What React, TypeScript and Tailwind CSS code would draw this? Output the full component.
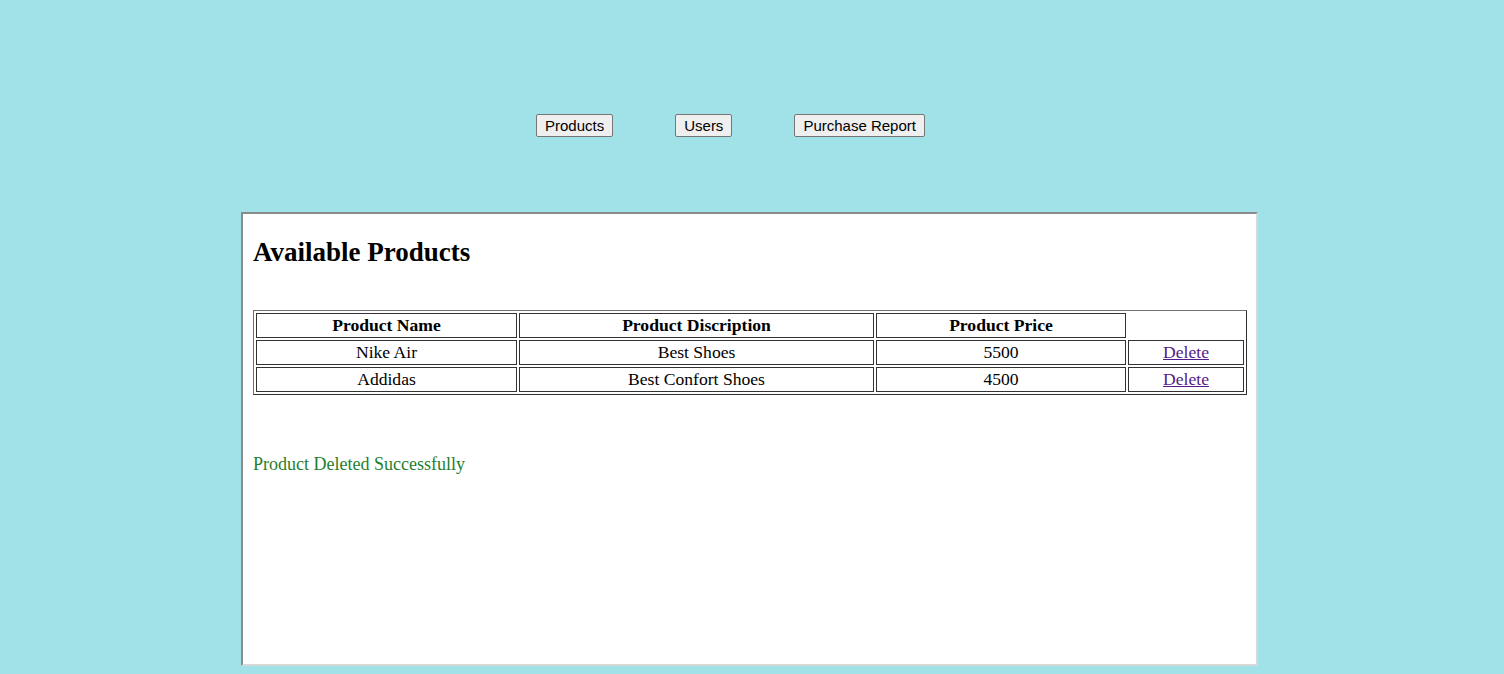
import React from "react";

const serif = { fontFamily: '"Liberation Serif", "Times New Roman", serif' };

export default function App() {
  const rows = [
    { name: "Nike Air", desc: "Best Shoes", price: "5500" },
    { name: "Addidas", desc: "Best Confort Shoes", price: "4500" },
  ];
  return (
    <div className="w-[1504px] h-[674px] bg-[#a0e2e8] overflow-hidden" style={serif}>
      <div className="pt-[114px] pl-[536px] flex items-center">
        {["Products", "Users", "Purchase Report"].map((b, i) => (
          <button
            key={b}
            className={`h-[23px] px-[8px] bg-[#efefef] border border-[#767676] rounded-[2px] text-[15px] text-black leading-none ${i > 0 ? "ml-[62px]" : ""}`}
            style={{ fontFamily: '"Liberation Sans", Arial, sans-serif' }}
          >
            {b}
          </button>
        ))}
      </div>
      <div className="mt-[75px] ml-[241px] w-[1017px] h-[454px] bg-white border-2 border-t-[#8a8a8a] border-l-[#8a8a8a] border-b-[#d8d8d8] border-r-[#d8d8d8] px-[10px]">
        <h2 className="text-[27px] font-bold text-black mt-[23px] leading-[30px]">Available Products</h2>
        <table className="mt-[43px] w-[994px] border-separate border-spacing-[2px] border border-t-[#707070] border-l-[#707070] border-b-[#303030] border-r-[#303030] text-[17.6px] text-black" style={serif}>
          <tbody>
            <tr className="h-[25px]">
              <th className="w-[261px] border border-[#333] p-0 leading-[21px] font-bold">Product Name</th>
              <th className="w-[355px] border border-[#333] p-0 leading-[21px] font-bold">Product Discription</th>
              <th className="w-[250px] border border-[#333] p-0 leading-[21px] font-bold">Product Price</th>
              <th className="w-[116px] p-0"></th>
            </tr>
            {rows.map((r) => (
              <tr key={r.name} className="h-[25px]">
                <td className="border border-[#333] p-0 leading-[21px] text-center">{r.name}</td>
                <td className="border border-[#333] p-0 leading-[21px] text-center">{r.desc}</td>
                <td className="border border-[#333] p-0 leading-[21px] text-center">{r.price}</td>
                <td className="border border-[#333] p-0 leading-[21px] text-center">
                  <a href="#" className="text-[#551a8b] underline">Delete</a>
                </td>
              </tr>
            ))}
          </tbody>
        </table>
        <p className="mt-[59px] text-[18px] text-[#1f7f2f] leading-[21px]">Product Deleted Successfully</p>
      </div>
    </div>
  );
}
